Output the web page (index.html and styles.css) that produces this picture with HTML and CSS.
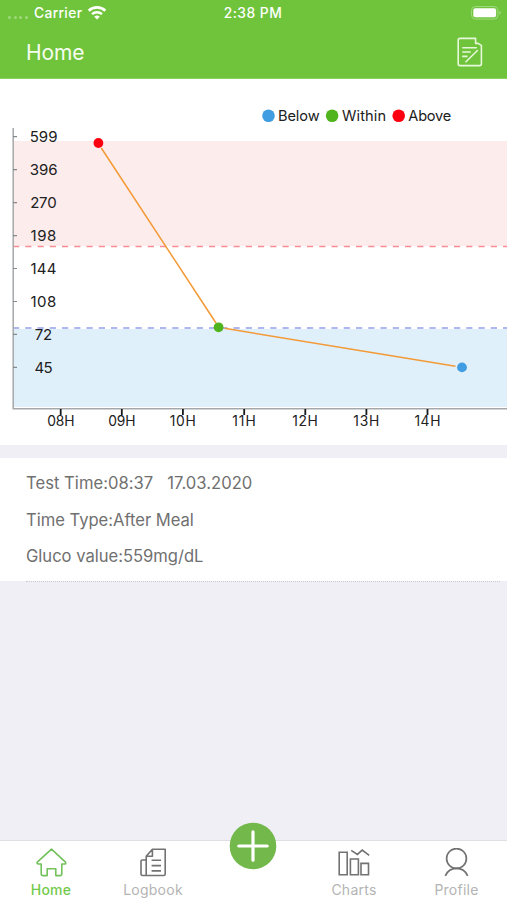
FILE: index.html
```html
<!DOCTYPE html>
<html lang="en">
<head>
<meta charset="utf-8">
<title>Home</title>
<link rel="stylesheet" href="styles.css">
</head>
<body>
<div class="app">
  <header class="header">
    <div class="status">
      <div class="status-left">
        <span class="signal"><i></i><i></i><i></i><i></i></span>
        <span class="carrier">Carrier</span>
        <svg class="wifi" width="20" height="16" viewBox="0 0 20 16" fill="none" stroke="#fff">
          <path d="M1.7 5.7a12 12 0 0 1 16.6 0" stroke-width="2.8"/>
          <path d="M5 9.2a7.3 7.3 0 0 1 10 0" stroke-width="2.4"/>
          <path d="M10 14.6l-2.8-2.9a4.1 4.1 0 0 1 5.6 0z" fill="#fff" stroke="none"/>
        </svg>
      </div>
      <span class="clock">2:38 PM</span>
      <div class="status-right">
        <svg width="32" height="16" viewBox="0 0 32 16">
          <rect x="1.5" y="1.5" width="26.5" height="12.6" rx="4" fill="none" stroke="#a0d87d" stroke-width="1"/>
          <rect x="3.3" y="3.3" width="22.8" height="9" rx="2" fill="#fff"/>
          <path d="M29.5 6v3.6q1.2-.5 1.2-1.8t-1.2-1.8z" fill="#b4e19c"/>
        </svg>
      </div>
    </div>
    <div class="nav">
      <h1 class="title">Home</h1>
      <svg width="26" height="30" viewBox="0 0 26 30" fill="none" stroke="#e6f7da" stroke-width="1.6" stroke-linejoin="round" stroke-linecap="round">
        <path d="M3 1.4h15.6v5h2.4l3.4 2V26.8q0 1.8-1.8 1.8H3q-1.8 0-1.8-1.8V3.2q0-1.8 1.8-1.8z"/>
        <path d="M5.8 10.8h13.4M5.8 15h7.4M5.8 19.4h4M20.4 13.5L9 24.8"/>
      </svg>
    </div>
  </header>

  <section class="chart-card">
    <svg class="chart" width="507" height="366" viewBox="0 79 507 366">
      <rect x="13" y="141" width="494" height="105" fill="#fdecec"/>
      <rect x="13" y="329" width="494" height="78" fill="#e0f0fa"/>
      <path d="M13 246.5H507" stroke="#f98d95" stroke-width="1.4" stroke-dasharray="6.2 6.05"/>
      <path d="M13 328H507" stroke="#969ee9" stroke-width="1.4" stroke-dasharray="6.2 6.05"/>
      <path d="M13.2 128V408.7H507" fill="none" stroke="#a5a8aa" stroke-width="1.5"/>
      <path d="M13 136.7h4M13 169.6h4M13 202.6h4M13 235.6h4M13 268.5h4M13 301.5h4M13 334.4h4M13 367.4h4" stroke="#85898b" stroke-width="1.2"/>
      <path d="M60.7 409v6M121.8 409v6M182.9 409v6M244.2 409v6M305.3 409v6M366.4 409v6M427.5 409v6" stroke="#17191a" stroke-width="1.8"/>
      <path d="M101.3 148L216 323M224.5 328.3L455.5 366.2" stroke="#f39a37" stroke-width="1.5"/>
      <circle cx="98.4" cy="143" r="4.9" fill="#fc0010"/>
      <circle cx="218.6" cy="327.3" r="4.9" fill="#50b41e"/>
      <circle cx="462" cy="367.4" r="4.9" fill="#409de1"/>
      <g class="y-labels">
        <text x="43.6" y="142.4" textLength="27.8">599</text>
        <text x="43.6" y="175.4" textLength="27.8">396</text>
        <text x="43.4" y="208.3" textLength="26.5">270</text>
        <text x="43.4" y="241.3" textLength="26">198</text>
        <text x="43.4" y="274.2" textLength="26">144</text>
        <text x="43.4" y="307.2" textLength="26">108</text>
        <text x="43.4" y="340.2" textLength="17.5">72</text>
        <text x="43.6" y="373.1" textLength="18.3">45</text>
      </g>
      <g class="x-labels">
        <text x="60.8" y="426" textLength="27.2">08H</text>
        <text x="121.9" y="426" textLength="27.2">09H</text>
        <text x="182.8" y="426" textLength="26">10H</text>
        <text x="243.9" y="426" textLength="23.5">11H</text>
        <text x="305.1" y="426" textLength="25.5">12H</text>
        <text x="366.3" y="426" textLength="26">13H</text>
        <text x="427.4" y="426" textLength="26">14H</text>
      </g>
      <g class="legend">
        <circle cx="268.5" cy="115.8" r="6.3" fill="#409de1"/>
        <text x="278" y="121" textLength="41.6">Below</text>
        <circle cx="332.1" cy="115.8" r="6.3" fill="#50b41e"/>
        <text x="342" y="121" textLength="44">Within</text>
        <circle cx="398.7" cy="115.8" r="6.3" fill="#fc0010"/>
        <text x="408.3" y="121" textLength="43">Above</text>
      </g>
    </svg>
  </section>

  <section class="record">
    <p class="time"><span>Test Time:08:37</span><span>17.03.2020</span></p>
    <p class="type">Time Type:After Meal</p>
    <p class="value">Gluco value:559mg/dL</p>
  </section>
  <div class="divider"></div>

  <nav class="tabs">
    <a class="tab active">
      <svg width="32" height="30" viewBox="0 0 32 30" fill="none" stroke="#72c15b" stroke-width="1.6" stroke-linejoin="round">
        <path d="M16.5 1.2L2.3 14.2Q1.5 16 3.5 16H6.2V26Q6.2 27.6 7.8 27.6H12.2V20.8H20.8V27.6H25.2Q26.8 27.6 26.8 26V16H29.5Q31.3 16 30.5 14.2Z"/>
      </svg>
      <span>Home</span>
    </a>
    <a class="tab logbook">
      <svg width="28" height="30" viewBox="0 0 28 30" fill="none" stroke="#727272" stroke-width="1.6" stroke-linejoin="round">
        <path d="M7.2 27.5V8.2L13.4 1.2H26.2V26q0 1.5-1.5 1.5H3.6q-1.6 0-1.6-1.6V13.2q0-1.2 1.2-1.2H7.2M13.4 1.5V8.3H7.4M12.6 12.3h9.4M12.6 17.6h9.4M12.6 22.9h9.4"/>
      </svg>
      <span>Logbook</span>
    </a>
    <a class="add">
      <svg width="48" height="48" viewBox="0 0 48 48">
        <circle cx="24" cy="24" r="23.3" fill="#72b84a"/>
        <path d="M24 9.8V38.2M9.8 24H38.2" stroke="#fff" stroke-width="3.2" stroke-linecap="round"/>
      </svg>
    </a>
    <a class="tab charts">
      <svg width="34" height="30" viewBox="0 0 34 30" fill="none" stroke="#727272" stroke-width="1.6">
        <path d="M2.2 4.2h8v22.5h-8zM13.4 11h8v15.7h-8zM24 15.4h7.5v11.3H24zM14.2 2.4l6.2 4 4.8-4.3 7 5.3"/>
      </svg>
      <span>Charts</span>
    </a>
    <a class="tab profile">
      <svg width="26" height="30" viewBox="0 0 26 30" fill="none" stroke="#727272" stroke-width="1.7">
        <circle cx="12.5" cy="10.5" r="9.9"/>
        <path d="M1.3 27.8Q4.5 20.3 12.5 20.3T23.7 27.8"/>
      </svg>
      <span>Profile</span>
    </a>
  </nav>
</div>
</body>
</html>
```
FILE: styles.css
```css
* { box-sizing: border-box; }
body { margin: 0; background: #f0eff5; font-family: Inter, "Liberation Sans", sans-serif; }
.app { width: 507px; height: 900px; display: flex; flex-direction: column; background: #f0eff5; }
.header { height: 79px; background: #70c43c; color: #fff; flex: none; border-bottom: 1px solid #8bd15e; }
.status { height: 26px; display: grid; grid-template-columns: 1fr auto 1fr; align-items: center; font-size: 13.8px; font-weight: 500; letter-spacing: .25px; padding: 0 6px 0 8px; }
.status-left { display: flex; align-items: center; }
.signal { display: flex; gap: 2.5px; width: 26px; padding-top: 9px; }
.signal i { width: 3px; height: 3px; border-radius: 50%; background: #a0d87d; }
.carrier { letter-spacing: .35px; }
.clock { margin-right: 1px; letter-spacing: .5px; transform: translateX(-1px); }
.wifi { margin-left: 5px; }
.status-right { display: flex; justify-content: flex-end; margin-right: -1px; }
.nav { height: 52px; display: flex; align-items: center; justify-content: space-between; padding: 0 24px 0 26px; }
.title { margin: 0; font-size: 21px; font-weight: 400; letter-spacing: -.1px; color: #f6fdf0; }
.chart-card { height: 366px; flex: none; background: #fff; margin-bottom: 13px; }
.chart { display: block; }
.chart text { fill: #202020; }
.y-labels { font-size: 15px; text-anchor: middle; }
.x-labels { font-size: 13.8px; text-anchor: middle; }
.legend { font-size: 14.6px; }
.record { height: 123px; flex: none; background: #fff; padding: 7px 26px 0; color: #707070; font-size: 16.6px; }
.record p { margin: 0; height: 36.7px; line-height: 36px; white-space: pre; }
.time { display: flex; gap: 14px; letter-spacing: .03px; }
.type { letter-spacing: -.02px; }
.value { letter-spacing: -.02px; }
.divider { margin: 0 7px 0 26px; height: 2px; flex: none; border-top: 1px dotted #c9c9ce; }
.tabs { margin-top: auto; height: 60px; flex: none; background: #fff; border-top: 1px solid #dfdfe3; display: grid; grid-template-columns: 102px 102px 98px 104px 101px; }
.tab { display: flex; flex-direction: column; align-items: center; padding-top: 7px; color: #b4b4b4; font-size: 14px; line-height: 17px; letter-spacing: .25px; }
.tab span { margin-top: 3px; }
.active { color: #72ca4b; font-weight: 500; }
.add { display: block; height: 48px; margin: -19px auto 0; }
.add svg { display: block; }
```
